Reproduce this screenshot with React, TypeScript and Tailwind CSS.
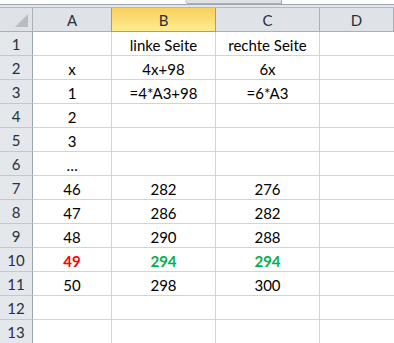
import React from 'react';

/*
  Sheet data
*/
type Cell = { text: string; color?: 'red' | 'green' };

const rows: Cell[][] = [
  [{ text: '' }, { text: 'linke Seite' }, { text: 'rechte Seite' }],
  [{ text: 'x' }, { text: '4x+98' }, { text: '6x' }],
  [{ text: '1' }, { text: '=4*A3+98' }, { text: '=6*A3' }],
  [{ text: '2' }, { text: '' }, { text: '' }],
  [{ text: '3' }, { text: '' }, { text: '' }],
  [{ text: '…' }, { text: '' }, { text: '' }],
  [{ text: '46' }, { text: '282' }, { text: '276' }],
  [{ text: '47' }, { text: '286' }, { text: '282' }],
  [{ text: '48' }, { text: '290' }, { text: '288' }],
  [{ text: '49', color: 'red' }, { text: '294', color: 'green' }, { text: '294', color: 'green' }],
  [{ text: '50' }, { text: '298' }, { text: '300' }],
  [{ text: '' }, { text: '' }, { text: '' }],
  [{ text: '' }, { text: '' }, { text: '' }],
];

const colorClass = (c?: 'red' | 'green') =>
  c === 'red' ? 'text-[#ff0000] font-bold' : c === 'green' ? 'text-[#00b050] font-bold' : 'text-black';

export default function App() {
  return (
    <main className="w-[394px] h-[343px] overflow-hidden bg-white font-['Lato','Liberation_Sans',sans-serif] text-[15px]">

      {/* Top strip (remains of the formula bar) */}
      <div className="h-2 flex flex-col">
        <div className="h-1 flex">
          <div className="w-[185px] bg-white" />
          <div className="w-[97px] bg-[#dfe3e8] border-r border-b border-[#a9afb7] rounded-bl-[4px]" />
          <div className="flex-1 bg-white" />
        </div>
        <div className="h-px bg-[#9ea4ab]" />
        <div className="flex-1 bg-[#e3e6ea] border-b border-[#b3b8be]" />
      </div>

      {/* Grid */}
      <div className="grid grid-cols-[33px_79px_104px_104px_1fr] auto-rows-[24px]">

        {/* Column headers */}
        <div className="bg-[#dfe3e8] border-r border-b border-[#a9b0b8] relative">
          <div className="absolute right-[4px] bottom-[4px] w-0 h-0 border-l-[13px] border-l-transparent border-b-[13px] border-b-[#b8bdc3]" />
        </div>
        <div className="bg-[#dfe3e8] border-r border-b border-[#a9b0b8] flex items-center justify-center pt-[2px] text-[#27313c]">A</div>
        <div className="bg-gradient-to-b from-[#f9cf5c] to-[#ffec8f] border border-t-0 border-[#c29b3a] -ml-px flex items-center justify-center pt-[2px] text-[#27313c]">B</div>
        <div className="bg-[#dfe3e8] border-r border-b border-[#a9b0b8] flex items-center justify-center pt-[2px] text-[#27313c]">C</div>
        <div className="bg-[#dfe3e8] border-r border-b border-[#a9b0b8] flex items-center justify-center pt-[2px] text-[#27313c]">D</div>

        {/* Rows */}
        {rows.map((row, i) => (
          <React.Fragment key={i}>
            <div className="bg-[#e4e7ec] border-r border-r-[#9da5b0] border-b border-b-[#c3c8cf] flex items-center justify-center pt-[2px] text-[#27313c]">
              {i + 1}
            </div>
            {row.map((cell, j) => (
              <div
                key={j}
                className={`border-r border-b border-[#d4d4d4] flex items-center justify-center pt-[3px] whitespace-nowrap ${colorClass(cell.color)}`}
              >
                {cell.text}
              </div>
            ))}
            <div className="border-b border-[#d4d4d4]" />
          </React.Fragment>
        ))}
      </div>
    </main>
  );
}
